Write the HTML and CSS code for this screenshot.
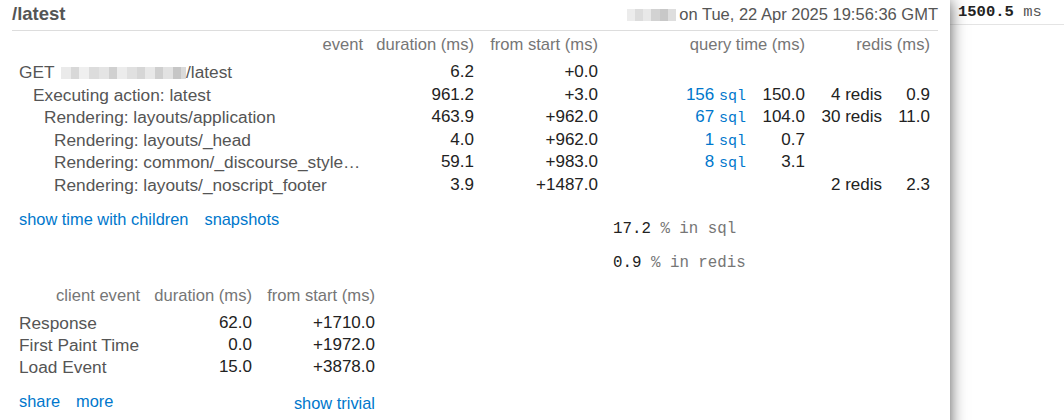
FILE: index.html
```html
<!DOCTYPE html>
<html lang="en">
<head>
<meta charset="utf-8">
<title>/latest</title>
<link rel="stylesheet" href="styles.css">
</head>
<body>
<div class="page">
  <div class="popup">
    <div class="info">
      <span class="name">/latest</span>
      <span class="server"><span class="redact redact-host"></span>on Tue, 22 Apr 2025 19:56:36 GMT</span>
    </div>

    <div class="timings">
      <div class="th">event</div>
      <div class="th">duration (ms)</div>
      <div class="th">from start (ms)</div>
      <div class="th span2">query time (ms)</div>
      <div class="th span2">redis (ms)</div>

      <div class="label d0">GET <span class="redact redact-url"></span>/latest</div>
      <div class="num">6.2</div>
      <div class="num">+0.0</div>
      <div></div><div></div><div></div><div></div>

      <div class="label d1">Executing action: latest</div>
      <div class="num">961.2</div>
      <div class="num">+3.0</div>
      <div class="num"><a class="link">156 <span class="mono">sql</span></a></div>
      <div class="num">150.0</div>
      <div class="num">4 redis</div>
      <div class="num">0.9</div>

      <div class="label d2">Rendering: layouts/application</div>
      <div class="num">463.9</div>
      <div class="num">+962.0</div>
      <div class="num"><a class="link">67 <span class="mono">sql</span></a></div>
      <div class="num">104.0</div>
      <div class="num">30 redis</div>
      <div class="num">11.0</div>

      <div class="label d3">Rendering: layouts/_head</div>
      <div class="num">4.0</div>
      <div class="num">+962.0</div>
      <div class="num"><a class="link">1 <span class="mono">sql</span></a></div>
      <div class="num">0.7</div>
      <div></div><div></div>

      <div class="label d3">Rendering: common/_discourse_style…</div>
      <div class="num">59.1</div>
      <div class="num">+983.0</div>
      <div class="num"><a class="link">8 <span class="mono">sql</span></a></div>
      <div class="num">3.1</div>
      <div></div><div></div>

      <div class="label d3">Rendering: layouts/_noscript_footer</div>
      <div class="num">3.9</div>
      <div class="num">+1487.0</div>
      <div></div><div></div>
      <div class="num">2 redis</div>
      <div class="num">2.3</div>
    </div>

    <div class="lower">
      <div class="lower-left">
        <div class="links">
          <a class="link">show time with children</a>
          <a class="link">snapshots</a>
        </div>

        <div class="client">
          <div class="th">client event</div>
          <div class="th">duration (ms)</div>
          <div class="th">from start (ms)</div>

          <div class="label">Response</div>
          <div class="num">62.0</div>
          <div class="num">+1710.0</div>

          <div class="label">First Paint Time</div>
          <div class="num">0.0</div>
          <div class="num">+1972.0</div>

          <div class="label">Load Event</div>
          <div class="num">15.0</div>
          <div class="num">+3878.0</div>
        </div>

        <div class="footer">
          <div class="footer-links">
            <a class="link">share</a>
            <a class="link">more</a>
          </div>
          <a class="link trivial">show trivial</a>
        </div>
      </div>

      <div class="lower-right">
        <div class="pct"><span class="pct-num">17.2</span> <span class="pct-unit">% in sql</span></div>
        <div class="pct pct-second"><span class="pct-num">0.9</span> <span class="pct-unit">% in redis</span></div>
      </div>
    </div>
  </div>

  <div class="button">
    <span class="btn-num">1500.5</span> <span class="btn-unit">ms</span>
  </div>
</div>
</body>
</html>
```

FILE: styles.css
```css
html, body {
  margin: 0;
  padding: 0;
  background: #fff;
  overflow: hidden;
}

body {
  font-family: "Liberation Sans", Arial, Helvetica, sans-serif;
  color: #555;
}

.page {
  display: flex;
  align-items: flex-start;
  width: 1064px;
  height: 420px;
}

.popup {
  position: relative;
  z-index: 2;
  width: 950px;
  flex: 0 0 950px;
  min-height: 460px;
  background: #fff;
  box-shadow: 0 1px 15px #555;
}

/* header info */
.info {
  display: flex;
  justify-content: space-between;
  align-items: baseline;
  height: 31px;
  box-sizing: border-box;
  padding-top: 3px;
  margin: 0 12px;
  border-bottom: 1px solid #ddd;
  line-height: 22px;
}

.name {
  font-size: 18.5px;
  font-weight: bold;
  color: #555;
}

.server {
  font-size: 16.5px;
  color: #555;
}

.redact {
  display: inline-block;
  height: 12px;
  vertical-align: -1px;
}

.redact-host {
  width: 49px;
  margin-right: 3px;
  background: linear-gradient(90deg,
    #ececec 0 8px, #dcdcdc 8px 16px, #e8e8e8 16px 24px,
    #d2d2d2 24px 33px, #c8c8c8 33px 41px, #dedede 41px 49px);
}

.redact-url {
  width: 125px;
  height: 12px;
  margin-left: 2px;
  background: linear-gradient(90deg,
    #eaeaea 0 10px, #d8d8d8 10px 18px, #efefef 18px 28px,
    #dcdcdc 28px 38px, #e4e4e4 38px 48px, #d0d0d0 48px 56px,
    #ececec 56px 66px, #e0e0e0 66px 76px, #d6d6d6 76px 84px,
    #e8e8e8 84px 94px, #cfcfcf 94px 102px, #e2e2e2 102px 112px,
    #c6c6c6 112px 120px, #dadada 120px 125px);
}

/* main timings */
.timings {
  display: grid;
  grid-template-columns: 344px 111px 124px 148px 59px 77px 48px;
  grid-template-rows: 27.5px;
  grid-auto-rows: 22.5px;
  margin: 2.75px 0 0 19px;
  font-size: 17px;
  line-height: 22.5px;
  white-space: nowrap;
}

.th {
  color: #767676;
  text-align: right;
  font-size: 16.6px;
  line-height: 22.5px;
}

.span2 {
  grid-column: span 2;
}

.label {
  color: #555;
  font-size: 17.3px;
}

.d1 { padding-left: 14px; }
.d2 { padding-left: 25px; }
.d3 { padding-left: 35px; }

.num {
  text-align: right;
  color: #222;
}

.link {
  color: #0077cc;
  text-decoration: none;
  cursor: pointer;
}

.mono {
  font-family: "Liberation Mono", "DejaVu Sans Mono", monospace;
  font-size: 15px;
  line-height: 1;
}

/* lower section */
.lower {
  display: grid;
  grid-template-columns: 594px 1fr;
  padding-left: 19px;
}

.links {
  display: flex;
  gap: 16px;
  margin-top: 11.5px;
  font-size: 16.4px;
  line-height: 22.5px;
}

.client {
  display: grid;
  grid-template-columns: 121px 112px 123px;
  grid-template-rows: 27px;
  grid-auto-rows: 22px;
  margin-top: 54.5px;
  font-size: 17px;
  line-height: 22px;
  white-space: nowrap;
}

.footer {
  display: flex;
  justify-content: space-between;
  align-items: flex-start;
  width: 356px;
  margin-top: 12px;
  font-size: 16.4px;
  line-height: 22.5px;
}

.footer-links {
  display: flex;
  gap: 16px;
}

.trivial {
  margin-top: 2px;
}

.lower-right {
  font-family: "Liberation Mono", "DejaVu Sans Mono", monospace;
  font-size: 15.8px;
  line-height: 22.5px;
}

.pct {
  margin-top: 21.5px;
  white-space: nowrap;
}

.pct-second {
  margin-top: 11.5px;
}

.pct-num {
  color: #222;
}

.pct-unit {
  color: #767676;
}

/* profiler button */
.button {
  flex: 1;
  position: relative;
  z-index: 1;
  height: 25px;
  box-sizing: border-box;
  padding: 3px 8px 0;
  border-bottom: 1px solid #e4e4e4;
  font-family: "Liberation Mono", "DejaVu Sans Mono", monospace;
  font-size: 15.5px;
  line-height: 19px;
  white-space: nowrap;
}

.btn-num {
  font-weight: bold;
  color: #222;
}

.btn-unit {
  color: #555;
}
```
